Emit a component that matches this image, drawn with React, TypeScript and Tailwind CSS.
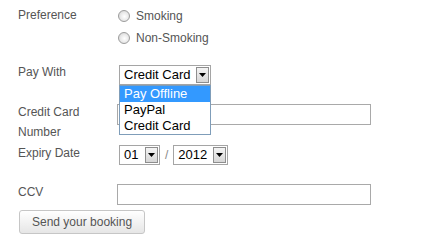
import React from "react";

const Arrow = () => (
  <span className="my-[1px] mr-[1px] flex w-[13px] items-center justify-center border border-[#8e8e8e] bg-gradient-to-b from-[#f4f4f4] to-[#d6d6d6]">
    <svg width="7" height="4" viewBox="0 0 7 4">
      <path d="M0 0h7L3.5 4z" fill="#000" />
    </svg>
  </span>
);

const FakeSelect = ({ value, width }: { value: string; width: string }) => (
  <div className={`flex h-[20px] border border-[#a5a5a5] bg-white ${width}`}>
    <span className="flex-1 pl-[4px] text-[13px] leading-[18px] text-black">{value}</span>
    <Arrow />
  </div>
);

const Radio = ({ label }: { label: string }) => (
  <div className="flex h-[22px] items-center gap-[6px]">
    <span className="ml-[1px] h-[12px] w-[12px] rounded-full border border-[#9c9c9c] bg-[radial-gradient(circle_at_55%_55%,#ffffff_0%,#ececec_45%,#cfcfcf_100%)]" />
    <span>{label}</span>
  </div>
);

const PAY_OPTIONS = ["Pay Offline", "PayPal", "Credit Card"];

export default function App() {
  return (
    <div className="relative h-[251px] w-[421px] bg-white pl-[18px] pt-[5px] font-['Liberation_Sans',Arial,sans-serif] text-[12px] text-[#555]">
      {/* Preference */}
      <div className="flex">
        <label className="w-[99px] leading-[20px]">Preference</label>
        <div className="flex flex-col">
          <Radio label="Smoking" />
          <Radio label="Non-Smoking" />
        </div>
      </div>

      {/* Pay With */}
      <div className="mt-[13px] flex items-start">
        <label className="w-[99px] leading-[20px]">Pay With</label>
        <div className="relative ml-[2px] mt-[3px]">
          <FakeSelect value="Credit Card" width="w-[92px]" />
          <ul className="absolute left-0 top-[20px] z-10 w-[92px] border border-[#7f9db9] bg-white text-[13px] text-black">
            {PAY_OPTIONS.map((o, i) => (
              <li
                key={o}
                className={`h-[16px] pl-[4px] leading-[16px] ${i === 0 ? "bg-[#3399ff] text-white" : ""}`}
              >
                {o}
              </li>
            ))}
          </ul>
        </div>
      </div>

      {/* Credit Card Number */}
      <div className="mt-[17px] flex items-start">
        <label className="w-[99px] leading-[20px]">
          Credit Card
          <br />
          Number
        </label>
        <input className="mt-[2px] h-[21px] w-[254px] border border-[#a9a9a9] bg-white outline-none" />
      </div>

      {/* Expiry Date */}
      <div className="mt-[1px] flex items-start">
        <label className="w-[99px] leading-[20px]">Expiry Date</label>
        <div className="ml-[2px] mt-[2px] flex items-center">
          <FakeSelect value="01" width="w-[41px]" />
          <span className="mx-[5px] text-[#888]">/</span>
          <FakeSelect value="2012" width="w-[55px]" />
        </div>
      </div>

      {/* CCV */}
      <div className="mt-[17px] flex items-start">
        <label className="w-[99px] leading-[20px]">CCV</label>
        <input className="mt-[2px] h-[21px] w-[254px] border border-[#a9a9a9] bg-white outline-none" />
      </div>

      <button className="ml-[1px] mt-[5px] h-[24px] rounded-[3px] border border-[#c6c6c6] bg-gradient-to-b from-white to-[#e6e6e6] px-[12px] text-[12px] text-[#555]">
        Send your booking
      </button>
    </div>
  );
}
